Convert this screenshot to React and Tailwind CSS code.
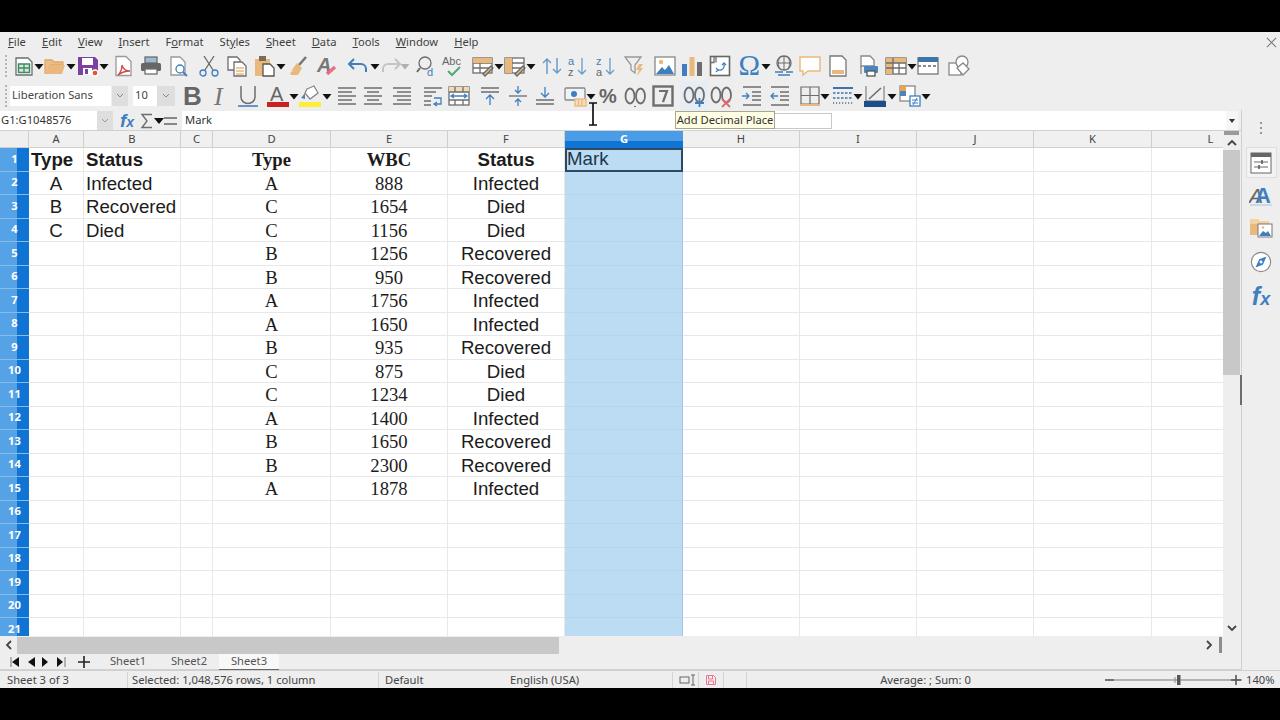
import React from "react";

const G = "#6d6d6d", O = "#e8b87c", B = "#3f7fbf";
const I = ({ c = "", children }) => (
  <svg viewBox="0 0 22 22" className={`h-[22px] w-[22px] shrink-0 overflow-visible ${c}`} fill="none" stroke={G} strokeWidth="1.3">
    {children}
  </svg>
);
const Arr = ({ c = "", gray }) => (
  <svg viewBox="0 0 10 22" className={`h-[22px] w-[10px] shrink-0 ${c}`}>
    <path d="M0.5 9h9L5 14.5z" fill={gray ? "#b0b0b0" : "#111"} />
  </svg>
);
const Grip = () => <div className="ml-[5px] h-[22px] w-[2px] shrink-0 border-l-2 border-dotted border-[#b5b5b5]" />;
const Lines = ({ ys, x1 = 2, x2 = 20, s = G }) => <path d={ys.map((y, i) => `M${x1} ${y}H${i % 2 ? x2 - 4 : x2}`).join("")} stroke={s} />;

function Toolbar1() {
  return (
    <div className="flex h-[29px] items-center pb-[2px]">
      <Grip />
      <I c="ml-[6px]"><path d="M3 3h12l4 4v13H3z" fill="#fff" /><rect x="5.5" y="9" width="11" height="8.5" fill="#d7e8dd" stroke="#3f8a62" strokeWidth="1.5" /><path d="M5.5 13h11M11 9v8.5" stroke="#3f8a62" /></I>
      <Arr c="-ml-[1px]" />
      <I><path d="M1 18V5h7l2 2h9v3H7L4 18z" fill="#eebd85" stroke="#e0a965" /><path d="M1 19l4-9h16l-3 9z" fill={O} stroke="none" /></I>
      <Arr />
      <I c="ml-[1px]"><path d="M1 2h17l3 3v15H1z" fill="#7c3fa2" stroke="none" /><rect x="5" y="3" width="11" height="7" fill="#fff" stroke="none" /><rect x="6" y="13" width="9" height="7" fill="#fff" stroke="none" /><rect x="8" y="14" width="3" height="5" fill="#7c3fa2" stroke="none" /><circle cx="18" cy="18" r="3" fill="#e2562f" stroke="#fff" /></I>
      <Arr />
      <I c="ml-[4px]"><path d="M3 1.5h10l5 5v14H3z" fill="#fff" stroke="#999" /><path d="M5 20c3-3 4-7 4-10 1 4 3 6 8 6-4 0-8 1-12 4z" stroke="#d24a43" /></I>
      <I c="ml-[5px]"><rect x="5" y="2" width="12" height="6" fill="#9fb9d5" stroke="#6d6d6d" /><rect x="1" y="8" width="20" height="8" rx="1.5" fill="#666" stroke="none" /><rect x="5" y="14" width="12" height="5" fill="#fff" /></I>
      <I c="ml-[6px]"><path d="M3 2h9l5 5v13H3z" fill="#fff" stroke="#999" /><circle cx="12" cy="14" r="4" fill="#fff" stroke={B} /><path d="M15 17l4 4" stroke={B} strokeWidth="1.8" /></I>
      <I c="ml-[8px]"><path d="M6 1l9 14M16 1L7 15" stroke="#666" /><circle cx="5" cy="18" r="3" stroke={B} /><circle cx="17" cy="18" r="3" stroke={B} /></I>
      <I c="ml-[6px]"><path d="M2 2h9l3 3v10H2z" fill="#fff" /><path d="M8 7h8l4 4v10H8z" fill="#fff" /><path d="M10 13h8M10 16h8M10 19h8" stroke={O} /></I>
      <I c="ml-[6px]"><rect x="1" y="4" width="15" height="17" fill={O} stroke="none" /><rect x="5" y="1" width="7" height="5" fill="#7d6a55" stroke="none" /><path d="M9 9h7l4 4v8H9z" fill="#fff" stroke="#555" /></I>
      <Arr />
      <I c="ml-[2px]"><path d="M18 2l-7 8" stroke="#777" strokeWidth="2.5" /><path d="M9 8l5 5-4 7H3l-1-2 4-3-3 1z" fill={O} stroke="none" /></I>
      <I c="ml-[6px]"><text x="1" y="17" fontFamily="Liberation Sans" fontWeight="700" fontStyle="italic" fontSize="20" fill="#777" stroke="none">A</text><path d="M11 19l8-7" stroke="#ea6d85" strokeWidth="3.5" /></I>
      <I c="ml-[9px]"><path d="M7 4L2 9l5 5" stroke={B} strokeWidth="2" /><path d="M2 9h12a5 5 0 0 1 5 5v3" stroke={B} strokeWidth="2" /></I>
      <Arr c="ml-[1px]" />
      <I><path d="M15 4l5 5-5 5" stroke="#c4c4c4" strokeWidth="2" /><path d="M20 9H8a5 5 0 0 0-5 5v3" stroke="#c4c4c4" strokeWidth="2" /></I>
      <Arr c="-ml-[2px]" gray />
      <I c="ml-[6px]"><circle cx="9" cy="8" r="6" /><path d="M4 13l-3 4" strokeWidth="2" /><text x="11" y="21" fontFamily="Liberation Sans" fontSize="11" fill={B} stroke="none">d</text></I>
      <I c="ml-[4px]"><text x="0" y="10" fontFamily="Liberation Sans" fontSize="11" fill="#666" stroke="none">Abc</text><path d="M6 16l4 4 8-8" stroke="#55a874" strokeWidth="2" /></I>
      <I c="ml-[8px]"><rect x="1" y="3" width="19" height="15" fill="#fff" /><path d="M1 8h19M1 13h19M8 3v15" /><rect x="1" y="3" width="19" height="5" fill={O} stroke="none" /><path d="M11 19l8-8 2 2-8 8z" fill={O} stroke="#666" /></I>
      <Arr />
      <I><rect x="1" y="3" width="19" height="15" fill="#fff" /><path d="M1 8h19M1 13h19M8 3v15" /><rect x="1" y="3" width="7" height="15" fill={O} stroke="none" /><path d="M11 19l8-8 2 2-8 8z" fill={O} stroke="#666" /></I>
      <Arr />
      <I c="ml-[5px]"><path d="M6 19V4M2 8l4-4 4 4" stroke="#6a9cc9" strokeWidth="1.5" /><path d="M16 3v15M12 14l4 4 4-4" stroke="#6a9cc9" strokeWidth="1.5" /></I>
      <I c="ml-[4px]"><text x="1" y="10" fontFamily="Liberation Sans" fontSize="11" fill={B} stroke="none">a</text><text x="1" y="21" fontFamily="Liberation Sans" fontSize="11" fill="#666" stroke="none">z</text><path d="M15 3v16M11 15l4 4 4-4" stroke="#6a9cc9" /></I>
      <I c="ml-[6px]"><text x="1" y="10" fontFamily="Liberation Sans" fontSize="11" fill={B} stroke="none">z</text><text x="1" y="21" fontFamily="Liberation Sans" fontSize="11" fill="#666" stroke="none">a</text><path d="M15 3v16M11 15l4 4 4-4" stroke="#6a9cc9" /></I>
      <I c="ml-[7px]"><path d="M1 2h16l-6 8v8l-4-3v-5z" stroke="#999" /><path d="M15 9l-3 6h3l-2 6 6-8h-3l3-4z" fill={O} stroke="none" /></I>
      <I c="ml-[8px]"><rect x="1" y="2" width="20" height="18" fill="#fff" stroke="#888" /><circle cx="7" cy="7" r="2.2" fill={O} stroke="none" /><path d="M2 19l6-7 3 3 4-5 5 9z" fill={B} stroke="none" /></I>
      <I c="ml-[5px]"><rect x="1" y="9" width="5" height="12" fill={B} stroke="none" /><rect x="8.5" y="2" width="5" height="19" fill={O} stroke="none" /><rect x="16" y="7" width="5" height="14" fill="#6d6d6d" stroke="none" /></I>
      <I c="ml-[6px]"><rect x="1.5" y="1.5" width="19" height="19" fill="#fff" stroke="#666" strokeWidth="1.6" /><path d="M5 1.5v6h-3.5M7 1.5v6" /><path d="M9 15c4 1 7-2 6-6" stroke={B} /><path d="M13 10l2-2 2 2M7 13l2 2-2 2" stroke={B} /></I>
      <I c="ml-[8px]"><text x="-0.5" y="20" fontFamily="Liberation Serif" fontSize="29" fill={B} stroke="none">Ω</text></I>
      <Arr />
      <I c="ml-[2px]"><circle cx="11" cy="8" r="7" /><path d="M4 8h14M11 1v14M7 1.5c-2 4-2 9 0 13M15 1.5c2 4 2 9 0 13" strokeWidth="1" /><path d="M2 17h8M13 17h7M5 20h12" stroke={B} strokeWidth="1.5" /></I>
      <I c="ml-[4px]"><path d="M1 2h20v14H9l-5 4v-4H1z" fill="#fff" stroke={O} strokeWidth="1.4" /></I>
      <I c="ml-[6px]"><path d="M3 1h12l4 4v16H3z" fill="#fff" stroke="#777" /><rect x="5" y="15" width="12" height="4" fill={O} stroke="none" /></I>
      <I c="ml-[9px]"><path d="M3 1h9l4 4v6H3z" fill="#fff" stroke="#888" /><path d="M3 11v8" stroke="#888" /><rect x="6" y="11" width="14" height="7" rx="1" fill="#4a85c0" stroke="none" /><rect x="9" y="16" width="8" height="5" fill="#fff" stroke="#555" /></I>
      <I c="ml-[5px]"><rect x="1" y="3" width="20" height="16" fill="#fff" /><rect x="1" y="3" width="7" height="16" fill={O} stroke="none" /><rect x="1" y="3" width="20" height="5" fill={O} stroke="none" /><path d="M1 8h20M1 13h20M8 3v16M14 8v11" /></I>
      <Arr />
      <I><rect x="1" y="3" width="20" height="16" fill="#fff" stroke="#777" /><rect x="1" y="2" width="20" height="5" fill="#3e74a8" stroke="none" /><path d="M1 11h20" stroke="#666" strokeDasharray="3 2" /></I>
      <I c="ml-[9px]"><rect x="1" y="8" width="12" height="12" fill="#fff" stroke="#888" /><circle cx="14" cy="7" r="6" fill="#fff" stroke="#888" /><path d="M9 13l6-5 6 6-6 6z" fill="#fff" stroke="#888" /></I>
    </div>
  );
}

function Combo({ box, btn, text }) {
  return (
    <div className="flex h-[20px] items-center">
      <div className={`flex h-[20px] items-center bg-white pl-[2px] text-[11.2px] text-[#444] ${box}`}>{text}</div>
      <div className={`flex h-[20px] items-center justify-center bg-[#dedede] ${btn}`}>
        <svg viewBox="0 0 10 6" className="h-[6px] w-[10px]"><path d="M2 1l3 3 3-3" fill="none" stroke="#888" /></svg>
      </div>
    </div>
  );
}

function Toolbar2() {
  return (
    <div className="flex h-[29px] items-center">
      <Grip />
      <div className="ml-[3px]"><Combo box="w-[101px]" btn="ml-[1px] w-[16px]" text="Liberation Sans" /></div>
      <div className="ml-[5px]"><Combo box="w-[24px]" btn="w-[18px]" text="10" /></div>
      <I c="ml-[7px]"><text x="1" y="20" fontFamily="Liberation Sans" fontWeight="700" fontSize="26" fill="#666" stroke="none">B</text></I>
      <I c="ml-[6px]"><text x="4" y="20" fontFamily="Liberation Serif" fontStyle="italic" fontSize="26" fill="#777" stroke="none">I</text></I>
      <I c="ml-[5px]"><path d="M4 1v11a7 6.5 0 0 0 14 0V1" strokeWidth="1.5" /><path d="M1 21h20" stroke={B} strokeWidth="1.6" /></I>
      <I c="ml-[8px]"><text x="3" y="16" fontFamily="Liberation Sans" fontSize="20" fill="#666" stroke="none">A</text><rect x="0" y="17" width="22" height="5" fill="#c9211e" stroke="none" /></I>
      <Arr />
      <I><path d="M8 4l7-3 4 7-8 6-5-6z" fill="#fff" stroke="#888" /><path d="M2 13l4-5v6z" fill="#4a85c0" stroke="none" /><rect x="0" y="17" width="22" height="5" fill="#fdee3a" stroke="none" /></I>
      <Arr c="ml-[1px]" />
      <I c="ml-[4px]"><Lines ys={[3, 7, 11, 15, 19]} /></I>
      <I c="ml-[4px]"><path d="M2 3h18M5 7h12M2 11h18M5 15h12M2 19h18" /></I>
      <I c="ml-[7px]"><path d="M2 3h18M6 7h14M2 11h18M6 15h14M2 19h18" /></I>
      <I c="ml-[9px]"><path d="M2 3h18M2 7h12M2 11h8" /><path d="M2 16h7M2 20h7" /><path d="M12 13h7v6h-6M15 17l-3 2 3 2" stroke={B} /></I>
      <I c="ml-[4px]"><rect x="1" y="2" width="20" height="18" fill="#fff" /><rect x="1" y="2" width="20" height="5" fill="#f1d9bb" stroke="none" /><path d="M1 7h20M1 15h20M7 2v5M15 2v5M7 15v5M15 15v5" /><path d="M3 11h16M6 9l-3 2 3 2M16 9l3 2-3 2" stroke={B} /></I>
      <I c="ml-[9px]"><path d="M2 3h18M2 7h18" /><path d="M11 20V10M7 14l4-4 4 4" stroke={B} /></I>
      <I c="ml-[6px]"><path d="M2 11h18" /><path d="M11 1v7M8 5l3 3 3-3M11 21v-7M8 17l3-3 3 3" stroke={B} /></I>
      <I c="ml-[5px]"><path d="M2 15h18M2 19h18" /><path d="M11 2v10M7 8l4 4 4-4" stroke={B} /></I>
      <I c="ml-[8px]"><rect x="1" y="3" width="20" height="12" rx="1" fill="#eef3f8" stroke="#888" /><circle cx="10" cy="9" r="3" fill="#3f7fbf" stroke="none" /><rect x="11" y="14" width="11" height="7" fill="#f6dfbf" stroke={O} /><path d="M14.5 14v7M18 14v7" stroke={O} /></I>
      <Arr />
      <I c="ml-[3px]"><text x="0" y="18" fontFamily="Liberation Sans" fontWeight="700" fontSize="20" fill="#666" stroke="none">%</text></I>
      <I c="ml-[3px]"><ellipse cx="6" cy="11" rx="4.5" ry="7.5" strokeWidth="1.8" /><ellipse cx="16.5" cy="11" rx="4.5" ry="7.5" strokeWidth="1.8" /><path d="M11 21v1" strokeWidth="2" /></I>
      <I c="ml-[6px]"><rect x="1.5" y="1.5" width="19" height="19" strokeWidth="2.4" /><path d="M7 6h8l-4 11" strokeWidth="2.2" /></I>
      <div className="ml-[6px] flex h-[29px] w-[28px] shrink-0 items-center justify-center bg-[#e7edf4]">
        <I><ellipse cx="6" cy="10" rx="4.5" ry="7.5" strokeWidth="1.8" /><ellipse cx="16.5" cy="10" rx="4.5" ry="7.5" strokeWidth="1.8" /><path d="M16.5 13v9M12 18h9" stroke="#3f7fbf" strokeWidth="1.8" /></I>
      </div>
      <I c="ml-[2px]"><ellipse cx="6" cy="10" rx="4.5" ry="7.5" strokeWidth="1.8" /><ellipse cx="16.5" cy="10" rx="4.5" ry="7.5" strokeWidth="1.8" /><path d="M12 14l8 8M20 14l-8 8" stroke="#e06a6a" strokeWidth="1.8" /></I>
      <I c="ml-[9px]"><path d="M2 2h18M11 7h9M11 11h9M11 15h9M2 20h18" /><path d="M1 11h7M5 8l3 3-3 3" stroke={B} /></I>
      <I c="ml-[6px]"><path d="M2 2h18M11 7h9M11 11h9M11 15h9M2 20h18" /><path d="M9 11H2M5 8l-3 3 3 3" stroke={B} /></I>
      <I c="ml-[8px]"><path d="M2 2v17h18V2zM2 10.5h18M11 2v17" strokeWidth="1.2" /><path d="M1 20h20" stroke={O} strokeWidth="2" /></I>
      <Arr c="-ml-[1px]" />
      <I c="ml-[2px]"><path d="M1 3h20" stroke="#3e74a8" strokeWidth="2" /><path d="M1 8h20M1 13h20" strokeDasharray="2.5 1.5" stroke="#3e74a8" /><path d="M1 18h20" strokeDasharray="1.2 1.8" strokeWidth="1.5" /></I>
      <Arr c="-ml-[1px]" />
      <I c="ml-[1px]"><path d="M2 1v15h18V1" strokeWidth="1" /><path d="M5 14L17 3" strokeWidth="1.6" /><rect x="0" y="16" width="22" height="6" fill="#1b4f8a" stroke="none" /></I>
      <Arr c="ml-[1px]" />
      <I c="ml-[2px]"><rect x="1" y="1" width="15" height="15" fill="#fff" stroke="#888" /><rect x="1" y="1" width="6" height="5" fill="#e8a54b" stroke="none" /><rect x="1" y="6" width="6" height="5" fill="#4a85c0" stroke="none" /><rect x="11" y="11" width="10" height="10" fill="#fff" stroke={B} /><path d="M13 15h6M13 18h6M14 20l4-7" stroke={B} strokeWidth="1" /></I>
      <Arr />
    </div>
  );
}

const MENU = [
  ["", "F", "ile"], ["", "E", "dit"], ["", "V", "iew"], ["", "I", "nsert"], ["F", "o", "rmat"], ["St", "y", "les"],
  ["", "S", "heet"], ["", "D", "ata"], ["", "T", "ools"], ["", "W", "indow"], ["", "H", "elp"],
];

function Menu() {
  return (
    <div className="flex h-[20px] items-center justify-between pl-[8px] pr-[3px] text-[11.2px] text-[#3f3f3f]">
      <div className="flex gap-[16px]">
        {MENU.map(([a, u, b]) => (
          <span key={u + b}>{a}<span className="underline">{u}</span>{b}</span>
        ))}
      </div>
      <svg viewBox="0 0 12 12" className="h-[11px] w-[11px]"><path d="M1 1l10 10M11 1L1 11" stroke="#777" strokeWidth="1.1" /></svg>
    </div>
  );
}

function FormulaBar() {
  return (
    <div className="relative flex h-[21px] items-center border-b border-[#d0d0d0] pt-px">
      <div className="flex h-[19px] w-[97px] items-center bg-white pl-[1px] text-[11.2px] text-[#333]">G1:G1048576</div>
      <div className="flex h-[19px] w-[16px] items-center justify-center bg-[#dedede]">
        <svg viewBox="0 0 10 6" className="h-[6px] w-[10px]"><path d="M2 1l3 3 3-3" fill="none" stroke="#999" /></svg>
      </div>
      <span className="ml-[7px] w-[18px] font-['Liberation_Sans'] text-[19px] leading-none font-bold text-[#3f7fbf] italic">f<span className="text-[14px]">x</span></span>
      <svg viewBox="0 0 14 16" className="ml-[2px] h-[16px] w-[14px]"><path d="M12 1.5H2l5 6.5-5 6.5h10" fill="none" stroke="#6d6d6d" strokeWidth="1.4" /></svg>
      <svg viewBox="0 0 10 6" className="h-[6px] w-[10px]"><path d="M0 0h10L5 6z" fill="#111" /></svg>
      <svg viewBox="0 0 13 10" className="h-[10px] w-[13px]"><path d="M0 2h13M0 8h13" stroke="#666" strokeWidth="1.6" /></svg>
      <div className="ml-[5px] flex h-[19px] w-[1044px] items-center bg-white pl-[3px] text-[11.2px] text-[#333]">Mark</div>
      <div className="flex h-[19px] w-[12px] items-center justify-center bg-[#f6f6f6]">
        <svg viewBox="0 0 6 4" className="h-[4px] w-[6px]"><path d="M0 0h6L3 4z" fill="#333" /></svg>
      </div>
      <div className="absolute top-[3px] left-[675px] h-[16px] w-[157px] border border-[#c8c8c8] bg-white" />
      <div className="absolute top-px left-[675px] flex h-[18px] w-[100px] items-center justify-center border border-[#a8a690] bg-[#fffde2] text-[11.2px] whitespace-nowrap text-[#333]">Add Decimal Place</div>
      <svg viewBox="0 0 12 24" className="absolute -top-[8px] left-[587px] h-[24px] w-[12px]"><path d="M2 1h8M6 1v22M2 23h8" stroke="#111" strokeWidth="1.7" fill="none" /></svg>
    </div>
  );
}

const COLS = ["A", "B", "C", "D", "E", "F", "G", "H", "I", "J", "K", "L"];
const SANS = "font-['Liberation_Sans']";
const SERIF = "font-['Liberation_Serif']";
const DATA = [
  ["A", "888", "Infected"], ["C", "1654", "Died"], ["C", "1156", "Died"], ["B", "1256", "Recovered"], ["B", "950", "Recovered"],
  ["A", "1756", "Infected"], ["A", "1650", "Infected"], ["B", "935", "Recovered"], ["C", "875", "Died"], ["C", "1234", "Died"],
  ["A", "1400", "Infected"], ["B", "1650", "Recovered"], ["B", "2300", "Recovered"], ["A", "1878", "Infected"],
];
const LEFT = [["A", "Infected"], ["B", "Recovered"], ["C", "Died"]];

function cellOf(col, r) {
  if (r === 0) {
    return {
      A: ["Type", `${SANS} font-bold pl-[2px]`],
      B: ["Status", `${SANS} font-bold pl-[2px]`],
      D: ["Type", `${SERIF} font-bold text-center`],
      E: ["WBC", `${SERIF} font-bold text-center`],
      F: ["Status", `${SANS} font-bold text-center`],
      G: ["Mark", SANS],
    }[col] || ["", ""];
  }
  const d = DATA[r - 1];
  const l = LEFT[r - 1];
  if (col === "A" && l) return [l[0], `${SANS} text-center`];
  if (col === "B" && l) return [l[1], `${SANS} pl-[2px]`];
  if (col === "D" && d) return [d[0], `${SERIF} text-center`];
  if (col === "E" && d) return [d[1], `${SERIF} text-center`];
  if (col === "F" && d) return [d[2], `${SANS} text-center`];
  return ["", ""];
}

function Sheet() {
  const rows = Array.from({ length: 21 }, (_, i) => i);
  return (
    <div className="h-[505px] w-[1223px] overflow-hidden bg-white">
      <div className="grid grid-cols-[29px_55px_97px_32px_118px_117px_117px_118px_117px_117px_117px_118px_118px] grid-rows-[17px_repeat(21,23.5px)]">
        <div className="border-r border-b border-[#cfcfcf] bg-[#efefef]" />
        {COLS.map((c) => (
          <div key={c} className={c === "G"
            ? "flex items-center justify-center bg-[linear-gradient(180deg,#4a9ce6_10px,#0f74d3_10px)] text-[11.2px] font-bold text-white"
            : "flex items-center justify-center border-r border-b border-[#cfcfcf] bg-[#f0f0f0] text-[11.2px] text-[#444]"}>{c}</div>
        ))}
        {rows.map((r) => (
          <React.Fragment key={r}>
            <div className="flex items-center justify-center border-b border-[#86bcec] bg-[linear-gradient(90deg,#55a2e6_17px,#0f74d3_17px)] text-[11.2px] font-bold text-white">{r + 1}</div>
            {COLS.map((c) => {
              const [t, cls] = cellOf(c, r);
              const base = "overflow-visible whitespace-nowrap text-[18.67px] text-[#1c1c1c] ";
              const box = c === "G"
                ? r === 0
                  ? "border-2 border-[#2e4a63] bg-[#bcdcf4] leading-[17px] text-[#22364a] "
                  : "border-r border-b border-r-[#9fc6e6] border-b-[#b2d5f0] bg-[#bcdcf4] leading-[23px] "
                : "border-r border-b border-[#e8e8e8] leading-[23px] ";
              return <div key={c} className={base + box + cls}>{t}</div>;
            })}
          </React.Fragment>
        ))}
      </div>
    </div>
  );
}

const Chev = ({ d, c = "" }) => (
  <svg viewBox="0 0 10 10" className={`h-[10px] w-[10px] ${c}`}><path d={d} fill="none" stroke="#444" strokeWidth="1.8" /></svg>
);

function VScroll() {
  return (
    <div className="flex h-[505px] w-[17px] flex-col bg-[#eeeeee]">
      <div className="mx-px h-[4px] bg-[#9a9a9a]" />
      <div className="flex h-[15px] items-center justify-center"><Chev d="M1 7l4-4 4 4" /></div>
      <div className="h-[225px] bg-[#c8c8c8]" />
      <div className="flex-1" />
      <div className="flex h-[17px] items-center justify-center"><Chev d="M1 3l4 4 4-4" /></div>
    </div>
  );
}

function HScroll() {
  return (
    <div className="flex h-[18px] items-center bg-[#eeeeee]">
      <div className="flex w-[17px] justify-center"><Chev d="M7 1L3 5l4 4" /></div>
      <div className="h-[17px] w-[542px] bg-[#c8c8c8]" />
      <div className="ml-[642px] flex w-[15px] justify-center"><Chev d="M3 1l4 4-4 4" /></div>
      <div className="ml-[3px] h-[16px] w-[3px] bg-[#8d8d8d]" />
    </div>
  );
}

function Tabs() {
  return (
    <div className="flex h-[16px] items-center border-b border-[#d2d2d2] text-[11.2px] text-[#555]">
      <svg viewBox="0 0 58 12" className="ml-[10px] h-[12px] w-[58px]">
        <path d="M1 1v10" stroke="#777" /><path d="M9 1v10L2 6z" fill="#111" />
        <path d="M25 1v10l-7-5z" fill="#111" />
        <path d="M32 1v10l6-5z" fill="#111" />
        <path d="M47 1v10l6-5z" fill="#111" /><path d="M55 1v10" stroke="#777" />
      </svg>
      <svg viewBox="0 0 14 14" className="ml-[9px] h-[14px] w-[14px]"><path d="M7 1v12M1 7h12" stroke="#222" strokeWidth="1.6" /></svg>
      <div className="ml-[12px] w-[50px] text-center">Sheet1</div>
      <div className="ml-[11px] w-[50px] text-center">Sheet2</div>
      <div className="ml-[5px] flex h-[16px] w-[60px] items-center justify-center border-b border-[#666] bg-[#f8f8f8]">Sheet3</div>
    </div>
  );
}

function Status() {
  const sep = "h-full border-l border-[#d4d4d4]";
  return (
    <div className="flex h-[18px] items-center border-t border-[#cfcfcf] pt-px text-[11.2px] text-[#444]">
      <div className="w-[127px] pl-[7px]">Sheet 3 of 3</div>
      <div className={sep} />
      <div className="w-[250px] pl-[4px]">Selected: 1,048,576 rows, 1 column</div>
      <div className={sep} />
      <div className="w-[124px] pl-[6px]">Default</div>
      <div className="w-[169px] pl-[7px]">English (USA)</div>
      <div className={sep} />
      <svg viewBox="0 0 18 12" className="ml-[6px] h-[12px] w-[18px]"><rect x="1" y="3" width="9" height="6" fill="none" stroke="#666" /><path d="M12 1h4M14 1v10M12 11h4" stroke="#666" fill="none" /></svg>
      <div className={`ml-[1px] ${sep}`} />
      <svg viewBox="0 0 12 12" className="ml-[6px] h-[12px] w-[12px]"><path d="M1.5 1.5h7l2 2v7h-9z" fill="#fde8ec" stroke="#e27a92" /><path d="M3.5 2v3h4V2M3.5 10V7h5v3" fill="none" stroke="#e27a92" /></svg>
      <div className={`ml-[6px] ${sep}`} />
      <div className={`ml-[22px] ${sep}`} />
      <div className="w-[357px] text-center">Average: ; Sum: 0</div>
      <svg viewBox="0 0 140 14" className="h-[14px] w-[140px]">
        <path d="M1 7h9" stroke="#555" strokeWidth="1.6" />
        <path d="M10 7h128" stroke="#777" strokeWidth="1" />
        <path d="M71 4v6" stroke="#888" />
        <rect x="73" y="2" width="3.5" height="10" fill="#555" />
        <path d="M127 7h10M132 2v10" stroke="#555" strokeWidth="1.6" />
      </svg>
      <div className="ml-[2px]">140%</div>
    </div>
  );
}

function SideBar() {
  return (
    <div className="relative flex h-[560px] w-[39px] flex-col items-center border-l border-[#d0d0d0] bg-[#eeeeee]">
      <svg viewBox="0 0 4 14" className="mt-[11px] h-[14px] w-[4px]"><circle cx="2" cy="2" r="1" fill="#777" /><circle cx="2" cy="7" r="1" fill="#777" /><circle cx="2" cy="12" r="1" fill="#777" /></svg>
      <div className="mt-[12px] flex h-[31px] w-[31px] items-center justify-center border border-[#dddddd] bg-[#f3f3f3]">
        <svg viewBox="0 0 22 22" className="h-[22px] w-[22px]"><rect x="1" y="1" width="20" height="20" fill="#fff" stroke="#666" /><rect x="1" y="1" width="20" height="4" fill="#666" /><path d="M4 10h14M4 15h14" stroke="#666" /><path d="M12 8v4M9 13v4" stroke="#555" strokeWidth="1.5" /></svg>
      </div>
      <svg viewBox="0 0 24 24" className="mt-[5px] h-[24px] w-[24px]">
        <text x="0" y="20" fontFamily="Liberation Sans" fontStyle="italic" fontSize="21" fill="#666">A</text>
        <text x="6" y="20" fontFamily="Liberation Sans" fontWeight="700" fontSize="22" fill="#3f7fbf">A</text>
        <path d="M1 22h22" stroke="#a9c5e0" />
      </svg>
      <svg viewBox="0 0 24 24" className="mt-[8px] h-[24px] w-[24px]">
        <path d="M1 20V4h8l2 2h9v4H8v10z" fill="#f2d1a3" />
        <rect x="1" y="9" width="13" height="11" fill="#e8b87c" />
        <rect x="9" y="9" width="14" height="13" fill="#fff" stroke="#777" />
        <path d="M10 21l4-5 3 2 2-2 3 5z" fill="#3f7fbf" /><circle cx="14" cy="12.5" r="1.3" fill="#e8b87c" />
      </svg>
      <svg viewBox="0 0 24 24" className="mt-[12px] h-[22px] w-[22px]">
        <circle cx="12" cy="12" r="10.5" fill="#fff" stroke="#888" strokeWidth="1.2" />
        <path d="M18 6l-8 3-4 9 8-3z" fill="#3f7fbf" /><circle cx="12" cy="12" r="1.6" fill="#fff" />
      </svg>
      <span className="mt-[11px] font-['Liberation_Sans'] text-[25px] leading-none font-bold text-[#3f7fbf] italic">f<span className="text-[18px]">x</span></span>
      <div className="absolute top-[265px] -left-[2px] h-[30px] w-[2px] bg-[#6d6d6d]" />
    </div>
  );
}

export default function App() {
  return (
    <div className="flex h-[720px] w-[1280px] flex-col overflow-hidden bg-black font-['Noto_Sans',sans-serif]">
      <div className="h-[32px]" />
      <div className="flex h-[656px] flex-col bg-[#eeeeee]">
        <Menu />
        <Toolbar1 />
        <Toolbar2 />
        <div className="flex h-[560px]">
          <div className="flex w-[1241px] flex-col">
            <FormulaBar />
            <div className="flex">
              <Sheet />
              <VScroll />
            </div>
            <HScroll />
            <Tabs />
          </div>
          <SideBar />
        </div>
        <Status />
      </div>
      <div className="h-[32px]" />
    </div>
  );
}
